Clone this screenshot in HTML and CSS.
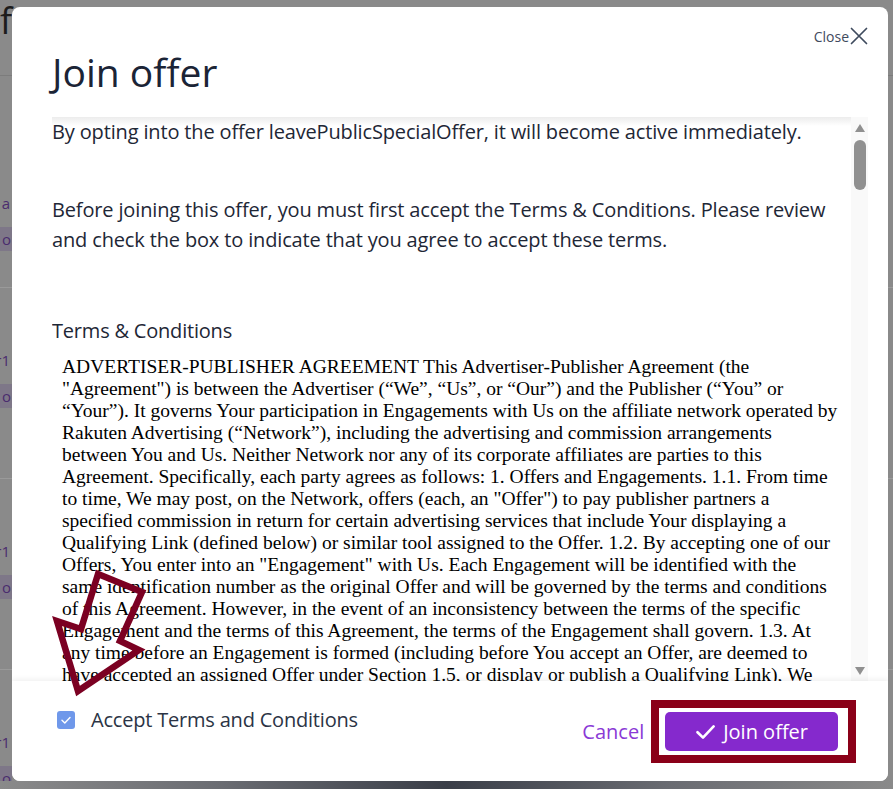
FILE: index.html
```html
<!DOCTYPE html>
<html lang="en">
<head>
<meta charset="utf-8">
<title>Join offer</title>
<link rel="stylesheet" href="styles.css">
</head>
<body>
<div class="page">
  <header class="page-head"><h1 class="page-title">f</h1></header>
  <div class="page-rows">
    <div class="page-row row-first">
      <div class="cell"><span class="row-name">a</span><span class="row-tag">o</span></div>
    </div>
    <div class="page-row">
      <div class="cell"><span class="row-name">r1</span><span class="row-tag">o</span></div>
    </div>
    <div class="page-row">
      <div class="cell"><span class="row-name">r1</span><span class="row-tag">o</span></div>
    </div>
    <div class="page-row">
      <div class="cell"><span class="row-name">r1</span><span class="row-tag">o</span></div>
    </div>
  </div>
  <div class="page-foot"></div>
</div>

<div class="modal" role="dialog" aria-labelledby="modal-title">
  <div class="modal-head">
    <h2 class="modal-title" id="modal-title">Join offer</h2>
    <button class="close-btn" type="button">Close<svg class="close-icon" width="18" height="18" viewBox="0 0 18 18" aria-hidden="true"><path d="M1.5 1.5 L16.5 16.5 M16.5 1.5 L1.5 16.5" fill="none" stroke="#3f4b5e" stroke-width="1.7" stroke-linecap="round"/></svg></button>
  </div>
  <div class="modal-body">
    <div class="scroll-content">
      <p class="lead">By opting into the offer leavePublicSpecialOffer, it will become active immediately.</p>
      <p class="lead lead-second">Before joining this offer, you must first accept the Terms &amp; Conditions. Please review and check the box to indicate that you agree to accept these terms.</p>
      <div class="terms-label">Terms &amp; Conditions</div>
      <div class="terms-text">ADVERTISER-PUBLISHER AGREEMENT This Advertiser-Publisher Agreement (the "Agreement") is between the Advertiser (“We”, “Us”, or “Our”) and the Publisher (“You” or “Your”). It governs Your participation in Engagements with Us on the affiliate network operated by Rakuten Advertising (“Network”), including the advertising and commission arrangements between You and Us. Neither Network nor any of its corporate affiliates are parties to this Agreement. Specifically, each party agrees as follows: 1. Offers and Engagements. 1.1. From time to time, We may post, on the Network, offers (each, an "Offer") to pay publisher partners a specified commission in return for certain advertising services that include Your displaying a Qualifying Link (defined below) or similar tool assigned to the Offer. 1.2. By accepting one of our Offers, You enter into an "Engagement" with Us. Each Engagement will be identified with the same identification number as the original Offer and will be governed by the terms and conditions of this Agreement. However, in the event of an inconsistency between the terms of the specific Engagement and the terms of this Agreement, the terms of the Engagement shall govern. 1.3. At any time before an Engagement is formed (including before You accept an Offer, are deemed to have accepted an assigned Offer under Section 1.5, or display or publish a Qualifying Link), We may modify or withdraw the Offer.</div>
    </div>
    <div class="scrollbar" aria-hidden="true">
      <span class="sb-up"></span>
      <span class="sb-thumb"></span>
      <span class="sb-down"></span>
    </div>
  </div>
  <div class="modal-foot">
    <label class="accept">
      <span class="checkbox"><svg width="18" height="18" viewBox="0 0 18 18" aria-hidden="true"><path d="M5 9.3 L7.8 12 L13 6.4" fill="none" stroke="#ffffff" stroke-width="1.4" stroke-linecap="round" stroke-linejoin="round"/></svg></span>
      Accept Terms and Conditions
    </label>
    <div class="actions">
      <button class="cancel-btn" type="button">Cancel</button>
      <button class="join-btn" type="button"><svg width="19" height="16" viewBox="0 0 19 16" aria-hidden="true"><path d="M1.5 8.2 L7 13.6 L17.6 2.4" fill="none" stroke="#ffffff" stroke-width="2.6" stroke-linecap="round" stroke-linejoin="round"/></svg>Join offer</button>
    </div>
  </div>
</div>

<div class="callout-box" aria-hidden="true"></div>
<svg class="callout-arrow" width="100" height="134" viewBox="50 566 100 134" aria-hidden="true">
  <polygon points="98,574 142,592 120,641 139,650 78,691 57,621 81,629" fill="none" stroke="#7b0022" stroke-width="6.5" stroke-linejoin="miter"/>
</svg>
</body>
</html>
```

FILE: styles.css
```css
* {
  box-sizing: border-box;
}

html, body {
  margin: 0;
  padding: 0;
}

body {
  width: 893px;
  height: 789px;
  overflow: hidden;
  position: relative;
  background: #8a8a8a;
  font-family: "Open Sans", "Noto Sans", sans-serif;
}

/* ---------- page behind the dialog ---------- */
.page {
  height: 789px;
  display: flex;
  flex-direction: column;
}

.page-head {
  height: 76px;
  flex-shrink: 0;
  border-bottom: 1px solid #7c7c7c;
}

.page-title {
  margin: 3px 0 0 0;
  font-size: 36px;
  font-weight: 400;
  line-height: 36px;
  color: #1c1c1c;
}

.page-rows {
  flex: 1;
  min-height: 0;
  overflow: hidden;
}

.page-row {
  height: 191px;
  padding-top: 62px;
  border-bottom: 1px solid #9a9a9a;
}

.page-row.row-first {
  height: 212px;
  padding-top: 117px;
}

.cell {
  width: 12px;
  display: flex;
  flex-direction: column;
  align-items: flex-end;
}

.row-name {
  white-space: nowrap;
  font-size: 15px;
  line-height: 20px;
  margin-right: 2px;
  color: #4a2c6e;
}

.row-tag {
  white-space: nowrap;
  margin-top: 14px;
  width: 12px;
  height: 24px;
  line-height: 24px;
  padding-left: 2px;
  font-size: 15px;
  background: #7e7788;
  color: #4a2c6e;
}

.page-foot {
  height: 8px;
  flex-shrink: 0;
  background: linear-gradient(90deg, #8a8a8a 0%, #6a6c72 25%, #3a3e48 50%, #6a6c72 75%, #8a8a8a 100%);
}

/* ---------- dialog ---------- */
.modal {
  position: absolute;
  left: 12px;
  top: 7px;
  width: 876px;
  height: 774px;
  background: #ffffff;
  border-radius: 8px;
  display: flex;
  flex-direction: column;
  overflow: hidden;
}

.modal-head {
  display: flex;
  justify-content: space-between;
  align-items: flex-start;
  padding: 20px 20px 0 40px;
}

.modal-title {
  margin: 18px 0 0;
  font-size: 39px;
  font-weight: 400;
  line-height: normal;
  color: #1b2436;
}

.close-btn {
  display: flex;
  align-items: center;
  gap: 1px;
  height: 18px;
  padding: 0;
  border: 0;
  background: none;
  font-family: "Open Sans", sans-serif;
  font-size: 14px;
  color: #3f4b5e;
}

.modal-body {
  flex: 1;
  min-height: 0;
  display: flex;
  margin: 19px 20px 0 40px;
}

.scroll-content {
  flex: 1;
  min-width: 0;
  overflow: hidden;
  background: linear-gradient(#ececec 0, #ffffff 9px);
}

.lead {
  margin: 0 0 48px;
  font-size: 20px;
  line-height: 30px;
  letter-spacing: -0.15px;
  color: #1e2736;
}

.lead.lead-second {
  margin-bottom: 61px;
}

.terms-label {
  font-size: 20px;
  line-height: 30px;
  letter-spacing: -0.2px;
  color: #1e2736;
}

.terms-text {
  padding: 10px;
  font-family: "Liberation Serif", "Times New Roman", serif;
  font-size: 19.5px;
  line-height: 22px;
  color: #000000;
}

.scrollbar {
  width: 17px;
  flex-shrink: 0;
  background: #f9f9f9;
  display: flex;
  flex-direction: column;
  align-items: center;
}

.sb-up {
  margin-top: 7px;
  width: 0;
  height: 0;
  border-left: 5.5px solid transparent;
  border-right: 5.5px solid transparent;
  border-bottom: 8px solid #909090;
}

.sb-thumb {
  margin-top: 8px;
  width: 12px;
  height: 50px;
  border-radius: 6px;
  background: #909090;
}

.sb-down {
  margin-top: auto;
  margin-bottom: 6px;
  width: 0;
  height: 0;
  border-left: 5.5px solid transparent;
  border-right: 5.5px solid transparent;
  border-top: 8px solid #909090;
}

.modal-foot {
  height: 100px;
  flex-shrink: 0;
  display: flex;
  justify-content: space-between;
  align-items: flex-start;
  padding: 24px 50px 0 45px;
  background: #ffffff;
  box-shadow: 0 -2px 5px rgba(0, 0, 0, 0.06);
  position: relative;
}

.accept {
  display: flex;
  align-items: center;
  gap: 16px;
  font-size: 20px;
  line-height: 30px;
  letter-spacing: -0.2px;
  color: #2b3445;
}

.checkbox {
  width: 18px;
  height: 18px;
  border-radius: 3px;
  background: #6f98ea;
  display: flex;
}

.actions {
  margin-top: 7px;
  display: flex;
  align-items: center;
  gap: 21px;
}

.cancel-btn {
  padding: 0;
  border: 0;
  background: none;
  font-family: "Open Sans", sans-serif;
  font-size: 20px;
  line-height: 39px;
  color: #8a39d6;
}

.join-btn {
  height: 39px;
  display: flex;
  align-items: center;
  gap: 8px;
  padding: 0 30px 0 31px;
  border: 0;
  border-radius: 5px;
  background: #8529cd;
  font-family: "Open Sans", sans-serif;
  font-size: 20px;
  color: #ffffff;
}

/* ---------- annotation overlays ---------- */
.callout-box {
  position: absolute;
  left: 651px;
  top: 700px;
  width: 205px;
  height: 63px;
  border: 8px solid #8a0018;
}

.callout-arrow {
  position: absolute;
  left: 50px;
  top: 566px;
  pointer-events: none;
}
```
